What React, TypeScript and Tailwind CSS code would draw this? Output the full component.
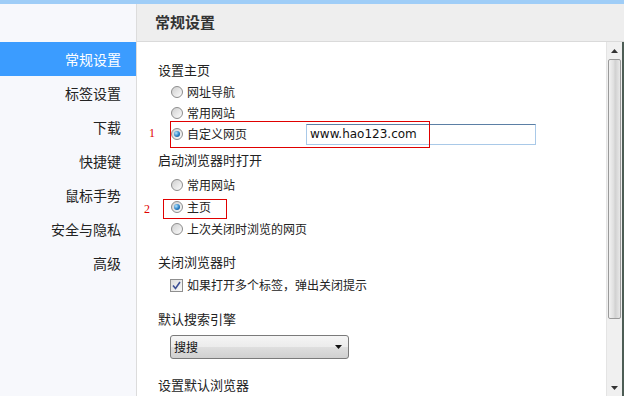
import React from "react";

const font = { fontFamily: '"Noto Sans CJK SC", "Noto Sans", sans-serif' };

function Radio({ checked }: { checked?: boolean }) {
  return (
    <span className="flex h-[12px] w-[12px] shrink-0 items-center justify-center rounded-full border border-[#8d8d8d] bg-[linear-gradient(135deg,#cfcfcf,#fdfdfd)]">
      {checked && (
        <span className="h-[6px] w-[6px] rounded-full bg-[radial-gradient(circle_at_35%_35%,#b4e6ff,#2a7fc4_55%,#0d4a86)]" />
      )}
    </span>
  );
}

function RadioRow({ label, checked }: { label: string; checked?: boolean }) {
  return (
    <div className="flex h-[20px] items-center gap-[4px] pl-[34px] text-[12px] text-[#222]">
      <Radio checked={checked} />
      <span>{label}</span>
    </div>
  );
}

function Heading({ children, className = "" }: { children: React.ReactNode; className?: string }) {
  return (
    <div className={`flex h-[20px] items-center pl-[21px] text-[13px] text-[#222] ${className}`}>{children}</div>
  );
}

const menu = ["常规设置", "标签设置", "下载", "快捷键", "鼠标手势", "安全与隐私", "高级"];

export default function App() {
  return (
    <div className="flex h-[396px] w-[624px] flex-col overflow-hidden bg-white" style={font}>
      {/* top strip */}
      <div className="h-[4px] bg-[#9fcdf7]" />

      <div className="flex flex-1 min-h-0">
        {/* sidebar */}
        <div className="w-[137px] shrink-0 border-r border-[#dcdcdc] bg-[#f7f8fc] pt-[38px]">
          {menu.map((m, i) => (
            <div
              key={m}
              className={`flex h-[34px] items-center justify-end pr-[15px] text-[14px] ${
                i === 0 ? "bg-[#3b9cff] text-white" : "text-[#222]"
              }`}
            >
              {m}
            </div>
          ))}
        </div>

        <div className="flex flex-1 min-w-0 flex-col">
          {/* header */}
          <div className="flex h-[38px] shrink-0 items-center border-b border-[#dadada] bg-[#eeeeee] pl-[18px] text-[15px] font-bold text-[#333]">
            常规设置
          </div>

          <div className="flex flex-1 min-h-0">
            {/* settings body */}
            <div className="relative flex-1">
              <Heading className="mt-[18px]">设置主页</Heading>
              <div className="mt-[2px]">
                <RadioRow label="网址导航" />
              </div>
              <div className="mt-[1px]">
                <RadioRow label="常用网站" />
              </div>
              <div className="flex h-[22px] items-center">
                <div className="flex w-[169px] items-center gap-[4px] pl-[34px] text-[12px] text-[#222]">
                  <Radio checked />
                  <span>自定义网页</span>
                </div>
                <div
                  className="flex h-[21px] w-[230px] items-center border border-[#a9c9e8] border-t-[#5b7fa5] pl-[3px] text-[12px] text-[#111]"
                  style={{ fontFamily: '"DejaVu Sans", sans-serif' }}
                >
                  www.hao123.com
                </div>
              </div>

              <Heading className="mt-[5px]">启动浏览器时打开</Heading>
              <div className="mt-[5px]">
                <RadioRow label="常用网站" />
              </div>
              <div className="mt-[2px]">
                <RadioRow label="主页" checked />
              </div>
              <div className="mt-[2px]">
                <RadioRow label="上次关闭时浏览的网页" />
              </div>

              <Heading className="mt-[13px]">关闭浏览器时</Heading>
              <div className="mt-[3px] flex h-[20px] items-center gap-[4px] pl-[33px] text-[12px] text-[#222]">
                <span className="flex h-[13px] w-[13px] items-center justify-center border border-[#8f8f8f] bg-[linear-gradient(135deg,#dcdcdc,#fafafa)]">
                  <svg width="9" height="9" viewBox="0 0 9 9">
                    <path d="M1 4.5 L3.5 7.5 L8 1" fill="none" stroke="#3c4f95" strokeWidth="1.6" />
                  </svg>
                </span>
                <span>如果打开多个标签，弹出关闭提示</span>
              </div>

              <Heading className="mt-[14px]">默认搜索引擎</Heading>
              <div className="ml-[33px] mt-[6px] flex h-[24px] w-[179px] items-center justify-between rounded-[3px] border border-[#7a7a7a] bg-[linear-gradient(#f5f5f5_0%,#ececec_48%,#dedede_52%,#d0d0d0_100%)] pl-[3px] pr-[6px] text-[12px] text-[#111]">
                <span>搜搜</span>
                <svg width="7" height="4" viewBox="0 0 7 4">
                  <path d="M0 0 H7 L3.5 4 Z" fill="#111" />
                </svg>
              </div>

              <Heading className="mt-[16px]">设置默认浏览器</Heading>

              {/* annotations */}
              <div className="absolute left-[33px] top-[79px] h-[27px] w-[260px] border border-[#e00000]" />
              <div
                className="absolute left-[12px] top-[84px] text-[12px] leading-[14px] text-[#e00000]"
                style={{ fontFamily: '"Liberation Serif", serif' }}
              >
                1
              </div>
              <div className="absolute left-[26px] top-[157px] h-[20px] w-[64px] border border-[#e00000]" />
              <div
                className="absolute left-[7px] top-[160px] text-[12px] leading-[14px] text-[#e00000]"
                style={{ fontFamily: '"Liberation Serif", serif' }}
              >
                2
              </div>
            </div>

            {/* scrollbar */}
            <div className="flex w-[18px] shrink-0 flex-col border-l border-[#e4e4e4] border-r-2 border-r-[#4d5d55] bg-[#f0f0f0]">
              <div className="flex h-[17px] items-center justify-center">
                <svg width="7" height="4" viewBox="0 0 7 4">
                  <path d="M0 4 H7 L3.5 0 Z" fill="#333" />
                </svg>
              </div>
              <div className="mx-[1px] h-[260px] rounded-[2px] border border-[#9a9a9a] bg-[linear-gradient(90deg,#f2f2f2,#dedede_45%,#d0d0d0_55%,#e8e8e8)]" />
              <div className="flex-1" />
              <div className="flex h-[17px] items-center justify-center">
                <svg width="7" height="4" viewBox="0 0 7 4">
                  <path d="M0 0 H7 L3.5 4 Z" fill="#333" />
                </svg>
              </div>
            </div>
          </div>
        </div>
      </div>
    </div>
  );
}
